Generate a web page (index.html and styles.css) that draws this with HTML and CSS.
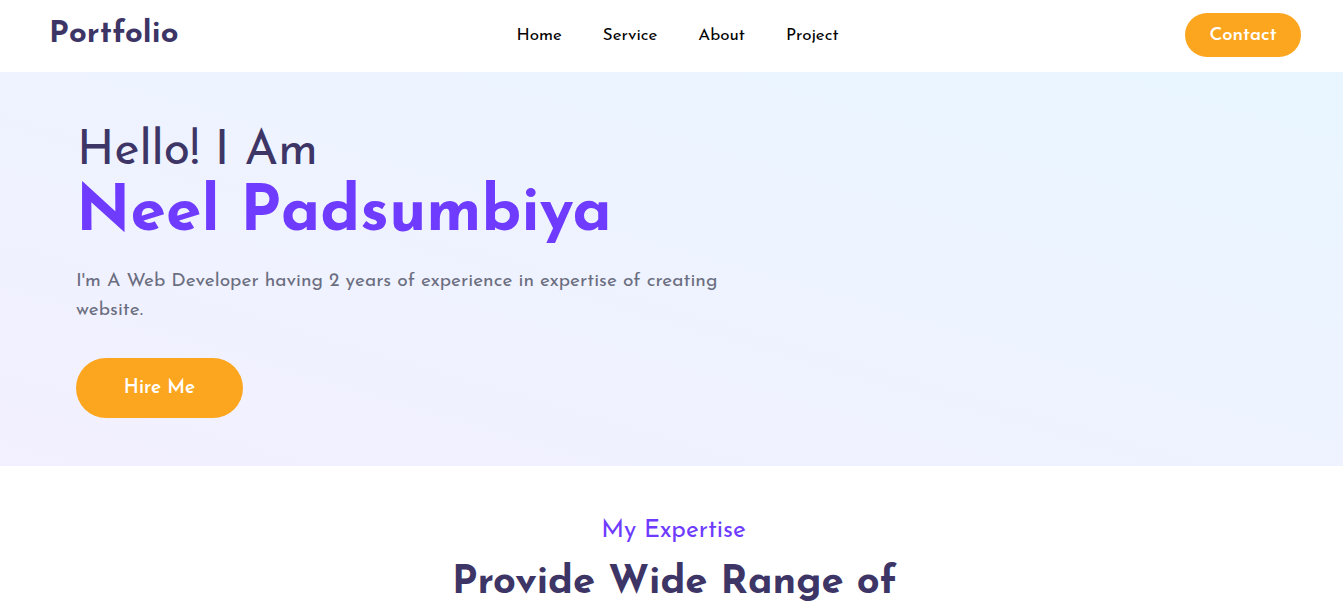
FILE: index.html
```html
<!DOCTYPE html>
<html lang="en">
<head>
<meta charset="utf-8">
<title>Portfolio</title>
<link rel="stylesheet" href="styles.css">
</head>
<body>
<header class="nav">
  <a class="brand" href="#">Portfolio</a>
  <nav class="links">
    <a href="#">Home</a>
    <a href="#">Service</a>
    <a href="#">About</a>
    <a href="#">Project</a>
  </nav>
  <div class="nav-end">
    <a class="btn contact" href="#">Contact</a>
  </div>
</header>
<section class="hero">
  <div class="hero-inner">
    <h2 class="hello">Hello! I Am</h2>
    <h1 class="name">Neel Padsumbiya</h1>
    <p class="intro">I'm A Web Developer having 2 years of experience in expertise of creating website.</p>
    <a class="btn hire" href="#">Hire Me</a>
  </div>
</section>
<section class="expertise">
  <p class="eyebrow">My Expertise</p>
  <h2 class="title">Provide Wide Range of<br>Services</h2>
</section>
</body>
</html>
```
FILE: styles.css
```css
* { box-sizing: border-box; }
html, body { margin: 0; padding: 0; }
body {
  font-family: "Josefin Sans", Lato, "Noto Sans", sans-serif;
  background: #ffffff;
  overflow: hidden;
}
a { text-decoration: none; }

.nav {
  height: 72px;
  display: grid;
  grid-template-columns: 1fr auto 1fr;
  align-items: center;
  padding: 0 42px 0 49px;
}
.brand {
  justify-self: start;
  font-size: 31px;
  font-weight: 700;
  color: #3d3566;
  letter-spacing: 0.2px;
  margin-top: -3px;
}
.links {
  display: flex;
  gap: 41px;
  padding-left: 5px;
}
.links a {
  font-size: 17px;
  font-weight: 400;
  color: #000000;
  margin-top: -2px;
}
.nav-end {
  justify-self: end;
  display: flex;
}
.btn {
  display: inline-flex;
  align-items: center;
  justify-content: center;
  background: #fca61f;
  color: #ffffff;
  border-radius: 999px;
  font-weight: 600;
}
.contact {
  width: 116px;
  height: 44px;
  font-size: 18.5px;
  margin-top: -2px;
}

.hero {
  height: 394px;
  background: linear-gradient(to top right, #f3f0ff, #e9f6ff);
  padding: 53px 0 0 76px;
}
.hello {
  margin: 0;
  font-size: 48px;
  font-weight: 400;
  color: #3d3566;
  line-height: 54px;
  padding-left: 1px;
}
.name {
  margin: 2px 0 0 0;
  font-size: 64px;
  font-weight: 700;
  color: #6e3bff;
  line-height: 66px;
}
.intro {
  margin: 20px 0 0 0;
  max-width: 690px;
  font-size: 19.2px;
  line-height: 29px;
  color: #6b6e80;
}
.hire {
  margin-top: 33px;
  width: 167px;
  height: 60px;
  font-size: 19px;
}

.expertise {
  text-align: center;
  padding-top: 50px;
}
.eyebrow {
  margin: 0;
  font-size: 24.6px;
  color: #6e3bff;
  line-height: 30px;
  padding-left: 4px;
}
.title {
  margin: 14px 0 0 0;
  font-size: 40px;
  font-weight: 700;
  color: #3d3566;
  line-height: 46px;
  padding-left: 6px;
}
```
